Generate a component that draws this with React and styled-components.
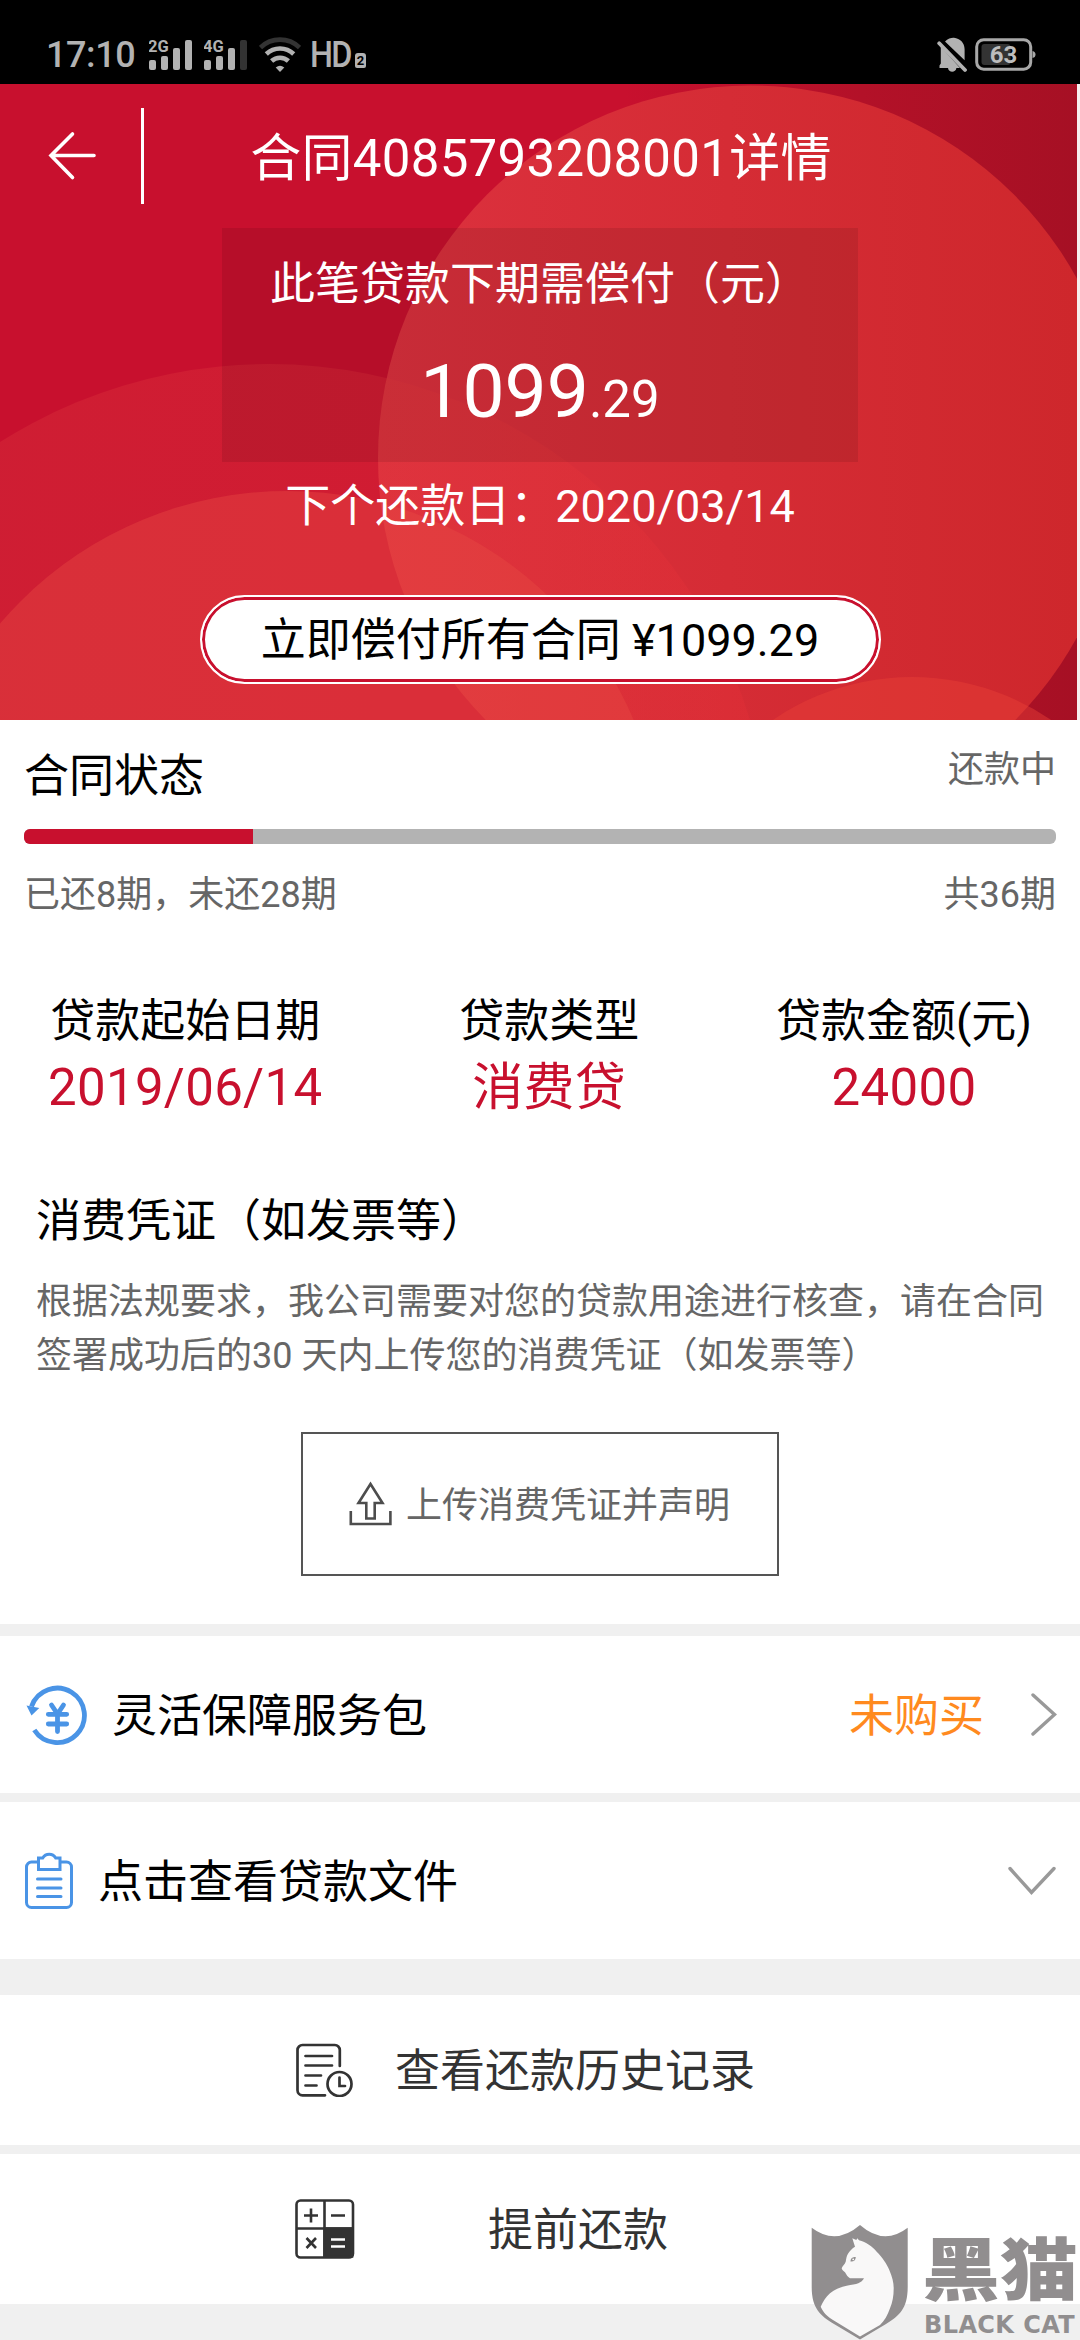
import React from 'react'
import styled, { createGlobalStyle } from 'styled-components'

const GlobalStyle = createGlobalStyle`
  * {
    box-sizing: border-box;
  }
  body {
    margin: 0;
    background: #fff;
    color: #000;
    font-family: Roboto, "Noto Sans CJK SC", sans-serif;
  }
  svg {
    display: block;
    flex-shrink: 0;
  }
`

const Page = styled.div`
  position: relative;
  width: 1080px;
  height: 2340px;
  overflow: hidden;
  display: flex;
  flex-direction: column;
  background: #f0f0f0;
`

/* status bar */
const StatusBar = styled.div`
  height: 84px;
  flex-shrink: 0;
  padding: 26px 44px 0 46px;
  display: flex;
  align-items: flex-start;
  justify-content: space-between;
  background: #000;
  color: #b2b2b2;
`
const StatusGroup = styled.div`
  display: flex;
  align-items: center;
  gap: ${(p) => p.$gap || 0}px;
  height: 58px;
`
const Clock = styled.span`
  width: 103px;
  font-size: 36px;
  font-weight: 500;
  line-height: 58px;
  letter-spacing: -0.4px;
`
const HdLabel = styled.span`
  width: 43px;
  margin-left: 9px;
  font-size: 36px;
  font-weight: 500;
  line-height: 58px;
  height: 58px;
  letter-spacing: -2px;
  transform: scaleX(0.9);
  transform-origin: left;
`
const HdBadge = styled.span`
  margin: 10px 0 0 2px;
  width: 11px;
  height: 15px;
  border-radius: 3px 3px 2px 2px;
  background: #b2b2b2;
  color: #000;
  font-size: 13px;
  font-weight: 700;
  line-height: 16px;
  text-align: center;
`

/* red header */
const Hero = styled.header`
  position: relative;
  height: 636px;
  flex-shrink: 0;
  border-right: 3px solid #f7eeee;
  background: linear-gradient(90deg, #c8102e 0, #c8102e 58%, #b31128 80%, #a61024 100%);
  color: #fff;
  display: flex;
  flex-direction: column;
  align-items: center;
`
const HeroArt = styled.svg`
  position: absolute;
  left: 0;
  top: 0;
`
const TitleBar = styled.div`
  position: relative;
  align-self: flex-start;
  width: 1077px;
  height: 144px;
  display: flex;
  align-items: center;
  padding-left: 48px;
`
const TitleDivider = styled.div`
  width: 3px;
  height: 96px;
  margin-left: 45px;
  background: #fff;
`
const Title = styled.h1`
  flex: 1;
  margin: 0 140px 0 1px;
  padding-top: 5px;
  text-align: center;
  font-size: 51px;
  font-weight: 400;
  line-height: 72px;
  letter-spacing: 0.3px;
`
const DueBox = styled.div`
  position: relative;
  width: 636px;
  height: 234px;
  margin-left: 3px;
  padding-top: 23px;
  display: flex;
  flex-direction: column;
  align-items: center;
  background: rgba(0, 0, 0, 0.09);
`
const DueLabel = styled.div`
  font-size: 45px;
  line-height: 68px;
  white-space: nowrap;
`
const DueAmount = styled.div`
  margin-top: 27px;
  font-size: 75px;
  line-height: 90px;
`
const Cents = styled.span`
  font-size: 51px;
`
const DueDate = styled.div`
  position: relative;
  margin: 11px 0 0 3px;
  font-size: 45px;
  line-height: 68px;
`
const PayButton = styled.button`
  position: relative;
  width: 681px;
  height: 89px;
  margin: 54px 0 0 3px;
  padding: 3px 0 0;
  border: 2px solid #fff;
  border-radius: 45px;
  background: #fff;
  box-shadow: inset 0 0 0 3px #c8102e;
  color: #000;
  font-family: inherit;
  font-size: 45px;
  line-height: 82px;
`

/* contract details */
const Details = styled.section`
  height: 904px;
  flex-shrink: 0;
  background: #fff;
`
const Line = styled.div`
  display: flex;
  justify-content: space-between;
  align-items: flex-start;
  padding: ${(p) => p.$pad || '0 24px'};
`
const Heading = styled.h2`
  margin: 0;
  font-size: 45px;
  font-weight: 400;
  line-height: 68px;
`
const Note = styled.span`
  font-size: 36px;
  line-height: 54px;
  color: #666;
`
const Track = styled.div`
  height: 15px;
  margin: 18px 24px 24px;
  border-radius: 6px;
  overflow: hidden;
  background: #b3b3b3;
`
const Fill = styled.div`
  height: 100%;
  background: #c8102e;
`
const Fact = styled.div`
  text-align: center;
`
const FactLabel = styled.div`
  font-size: 45px;
  line-height: 66px;
`
const FactValue = styled.div`
  font-size: 51px;
  line-height: 65px;
  letter-spacing: 0.3px;
  color: #c8102e;
`
const Proof = styled.div`
  padding: 68px 36px 0;
`
const ProofText = styled.p`
  margin: 19px 0 49px;
  font-size: 36px;
  line-height: 54px;
  color: #666;
`
const UploadButton = styled.button`
  display: flex;
  align-items: center;
  gap: 14px;
  width: 478px;
  height: 144px;
  margin: 0 auto;
  padding: 0 0 0 46px;
  border: 2px solid #555;
  background: #fff;
  color: #666;
  font-family: inherit;
`
const UploadText = styled.span`
  padding-top: 4px;
  font-size: 36px;
  line-height: 54px;
`

/* rows under the details */
const Row = styled.div`
  display: flex;
  align-items: center;
  height: ${(p) => p.$height || 157}px;
  flex-shrink: 0;
  margin-top: ${(p) => p.$gap}px;
  padding: ${(p) => p.$pad || '0 23px'};
  background: #fff;
`
const RowText = styled.span`
  flex: ${(p) => (p.$fixed ? 'none' : 1)};
  margin-left: ${(p) => p.$left}px;
  padding-top: 4px;
  width: ${(p) => (p.$fixed ? '360px' : 'auto')};
  text-align: ${(p) => (p.$fixed ? 'center' : 'left')};
  font-size: 45px;
  line-height: 68px;
  color: ${(p) => (p.$fixed ? '#333' : '#000')};
`
const RowState = styled.span`
  margin-right: 46px;
  padding-top: 4px;
  font-size: 45px;
  line-height: 68px;
  color: #ff8a1f;
`

/* corner watermark */
const Watermark = styled.div`
  position: absolute;
  left: 811px;
  top: 2225px;
  display: flex;
  color: #918e8f;
`
const Brand = styled.div`
  margin-left: 15px;
  padding-top: 6px;
  width: 155px;
`
const BrandName = styled.div`
  height: 79px;
  margin-left: -2px;
  font-family: "Noto Sans CJK SC", sans-serif;
  font-size: 78px;
  font-weight: 900;
  line-height: 79px;
  white-space: nowrap;
  transform: scaleY(0.88);
  transform-origin: top;
`
const BrandLatin = styled.div`
  margin-top: 2px;
  font-family: "DejaVu Sans", sans-serif;
  font-size: 24px;
  font-weight: 700;
  line-height: 26px;
  letter-spacing: 0.4px;
  white-space: nowrap;
`

const Signal = ({ label, strength }) => (
  <svg width="55" height="34" viewBox="0 0 55 34" fill="#b2b2b2">
    <text x="-1" y="13.5" fontSize="16.5" fontWeight="700" fontFamily="Roboto">{label}</text>
    {[[0, 10], [12, 14], [24, 22], [36, 30]].map(([x, h], i) => (
      <rect key={x} x={x} y={32 - h} width="7" height={h} rx="2" fill={i < strength ? '#b2b2b2' : '#333'} />
    ))}
  </svg>
)

const Wifi = () => (
  <svg width="42" height="36" viewBox="0 0 42 36" fill="none" stroke="#b2b2b2" strokeWidth="4.6">
    <path d="M1.5 10.5a28 28 0 0 1 39 0" stroke="#333" />
    <path d="M7.3 17a20 20 0 0 1 27.4 0" />
    <path d="M12.6 24a12.500 12.500 0 0 1 16.800 0" />
    <path d="M21 35l-4.300-4.600q4.300-3.400 8.600 0z" fill="#b2b2b2" stroke="none" />
  </svg>
)

const Bell = () => (
  <svg width="30" height="36" viewBox="0 0 30 36" fill="#b2b2b2">
    <path d="M8 4.500C11 1 15 .5 17 .7c6 .6 10.600 5 10.600 11.500v11z" />
    <path d="M3.800 9.500L23 31h-3.600c-.6 5-7.800 5-8.400 0H2.500v-2.600l1.300-2z" />
    <path d="M2.200 6.300l25.800 26.700" stroke="#b2b2b2" strokeWidth="3.800" strokeLinecap="round" />
  </svg>
)

const Battery = () => (
  <svg width="61" height="34" viewBox="0 0 61 34">
    <rect x="1.700" y="1.700" width="54" height="29.500" rx="7" fill="none" stroke="#a8a8a8" strokeWidth="3" />
    <path d="M57.500 13q3 .5 3 3.500t-3 3.500z" fill="#a8a8a8" />
    <rect x="6.500" y="6" width="29" height="21" rx="3" fill="#333" />
    <text x="28.500" y="25" textAnchor="middle" fontSize="24" fontWeight="700" fontFamily="Roboto" fill="#bdbdbd">63</text>
  </svg>
)

const BackArrow = () => (
  <svg width="48" height="50" viewBox="0 0 48 50" fill="none" stroke="#fff" strokeWidth="3.600" strokeLinecap="round">
    <path d="M24.500 3L3 24.500l21.500 22M3 24.500h43" />
  </svg>
)

const UploadIcon = () => (
  <svg width="43" height="46" viewBox="0 0 43 46" fill="none" stroke="#4d4d4d" strokeWidth="2.600">
    <path d="M21.500 3L9.500 22h7.800v15.500h8.400V22h7.800zM1.800 30v13h39.600V30" />
  </svg>
)

const YuanIcon = () => (
  <svg width="64" height="64" viewBox="0 0 64 64" fill="none" stroke="#4a94e6">
    <path d="M8.500 23.500A27.200 27.200 0 1 1 11.300 47" strokeWidth="4.800" />
    <path d="M3.500 22.500l12.800 2.500L8.500 32.500z" fill="#4a94e6" strokeWidth="0" />
    <path d="M28.500 22l6 9 6-9M25.300 31.300h18.400M25.300 41h18.400M34.500 31v17.500" strokeWidth="4.800" strokeLinecap="round" strokeLinejoin="round" />
  </svg>
)

const ClipboardIcon = () => (
  <svg width="52" height="58" viewBox="0 0 52 58" fill="none" stroke="#4a94e6" strokeWidth="3">
    <path d="M15 10H8.500a5 5 0 0 0-5 5V50.500a5 5 0 0 0 5 5h35a5 5 0 0 0 5-5V15a5 5 0 0 0-5-5H37.500" />
    <path d="M15.500 6v11.500h21.500V6h-4.300c-3-5-10-5-13 0z" />
    <path d="M14.500 27h23.500M14.500 36h23.500M14.500 44.500h23.500" strokeLinecap="round" />
  </svg>
)

const HistoryIcon = () => (
  <svg width="58" height="54" viewBox="0 0 58 54" fill="none" stroke="#333" strokeWidth="2.700" strokeLinecap="round">
    <path d="M29 52.300H6.500a5 5 0 0 1-5-5V7a5 5 0 0 1 5-5h32.300a5 5 0 0 1 5 5v16" />
    <path d="M9.500 13H36M9.500 22.500H36M9.500 32.500h15.500M9.500 42.500h11M43.500 34.500v8.500h5.500" />
    <circle cx="43.500" cy="41" r="12" />
  </svg>
)

const CalculatorIcon = () => (
  <svg width="60" height="60" viewBox="0 0 60 60" fill="none" stroke="#333" strokeWidth="2.600">
    <rect x="1.500" y="1.500" width="56.500" height="57" rx="4" />
    <path d="M29.500 29.500h27.500v28h-27.500z" fill="#333" />
    <path d="M29.500 1v58M1 29.500h58M9 16.500h14M16 9.500v14M36 16.500h14M11.500 39l9.500 10M21 39l-9.500 10" />
    <path d="M36 40.500h14M36 47.500h14" stroke="#fff" />
  </svg>
)

const Shield = () => (
  <svg width="98" height="115" viewBox="0 0 98 115">
    <path d="M.7 2.700Q24.700 21 49 0q24 21 47.700 2.700V62c0 22-8.700 29-21.700 37l-26 15.500L23 99C10 91 .7 84 .7 62z" fill="#918e8f" />
    <path d="M41.300 13.300l4 1.700 1-1.700 1.700 1.900C55 17 61.500 21.500 65.700 26.700 71 32 76 39 78.300 45c3 7 4.400 12.500 4.400 18.300 0 8-1.200 14-3.700 20-2.500 7-5.500 12.500-10 16.700L49 111.500 22 95C17 92 12 87.500 9.700 81.700c2.300-5 5-9.500 9.300-13.400 5-4.300 10.500-6.300 16.700-7.600 5-1 9-1.400 11.600-2.400 2.500-1 4.700-2.800 5.700-5H39c-2.500-1.500-3.500-3.500-5-6-1.600-1.200-3.300-2.500-3.300-4 .6-2.500 3-3.500 4-6.600.6-3 .8-6 2.600-8.400 1.600-2.600 4-5 6.700-6.600z" fill="#fff" fillOpacity=".94" />
    <path d="M39.500 36.500c.2-3.500 2-4.500 5.300-4.500-.3 3.300-2 4.800-5.300 4.500z" fill="#918e8f" />
    <circle cx="42.200" cy="34.300" r=".9" fill="#fff" />
  </svg>
)

const facts = [
  { label: '贷款起始日期', value: '2019/06/14' },
  { label: '贷款类型', value: '消费贷' },
  { label: '贷款金额(元)', value: '24000' },
]

const App = () => {
  const paid = 8
  const total = 36

  return (
    <Page>
      <GlobalStyle />
      <StatusBar>
        <StatusGroup>
          <Clock>17:10</Clock>
          <Signal label="2G" strength={4} />
          <Signal label="4G" strength={3} />
          <Wifi />
          <HdLabel>HD</HdLabel>
          <HdBadge>2</HdBadge>
        </StatusGroup>
        <StatusGroup $gap={8}>
          <Bell />
          <Battery />
        </StatusGroup>
      </StatusBar>

      <Hero>
        <HeroArt width="1077" height="636" viewBox="0 84 1077 636">
          <defs>
            <linearGradient id="disc" gradientUnits="userSpaceOnUse" x1="380" y1="0" x2="1077" y2="0">
              <stop offset="0" stopColor="#dc313e" />
              <stop offset="1" stopColor="#ce272c" />
            </linearGradient>
            <linearGradient id="hill" gradientUnits="userSpaceOnUse" x1="0" y1="0" x2="760" y2="0">
              <stop offset="0" stopColor="#e04040" stopOpacity=".28" />
              <stop offset="1" stopColor="#e83038" stopOpacity=".32" />
            </linearGradient>
          </defs>
          <circle cx="750.500" cy="458" r="372.500" fill="url(#disc)" />
          <circle cx="269" cy="867" r="503" fill="url(#hill)" />
          <circle cx="287" cy="868" r="377" fill="#e84a44" fillOpacity=".4" />
          <circle cx="912" cy="924" r="247" fill="#e84038" fillOpacity=".45" />
        </HeroArt>
        <TitleBar>
          <BackArrow />
          <TitleDivider />
          <Title>合同4085793208001详情</Title>
        </TitleBar>
        <DueBox>
          <DueLabel>此笔贷款下期需偿付（元）</DueLabel>
          <DueAmount>1099<Cents>.29</Cents></DueAmount>
        </DueBox>
        <DueDate>下个还款日：2020/03/14</DueDate>
        <PayButton>立即偿付所有合同 ¥1099.29</PayButton>
      </Hero>

      <Details>
        <Line $pad="23px 24px 0">
          <Heading>合同状态</Heading>
          <Note>还款中</Note>
        </Line>
        <Track>
          <Fill style={{ width: `${(paid / total) * 100}%` }} />
        </Track>
        <Line>
          <Note>已还{paid}期，未还{total - paid}期</Note>
          <Note>共{total}期</Note>
        </Line>
        <Line $pad="67px 48px 0 48px">
          {facts.map((fact) => (
            <Fact key={fact.label}>
              <FactLabel>{fact.label}</FactLabel>
              <FactValue>{fact.value}</FactValue>
            </Fact>
          ))}
        </Line>
        <Proof>
          <Heading>消费凭证（如发票等）</Heading>
          <ProofText>
            根据法规要求，我公司需要对您的贷款用途进行核查，请在合同签署成功后的30 天内上传您的消费凭证（如发票等）
          </ProofText>
          <UploadButton>
            <UploadIcon />
            <UploadText>上传消费凭证并声明</UploadText>
          </UploadButton>
        </Proof>
      </Details>

      <Row $gap={12}>
        <YuanIcon />
        <RowText $left={25}>灵活保障服务包</RowText>
        <RowState>未购买</RowState>
        <svg width="27" height="46" viewBox="0 0 27 46" fill="none" stroke="#999" strokeWidth="3.400" strokeLinecap="round">
          <path d="M3 3l21.500 19.500L3 42" />
        </svg>
      </Row>
      <Row $gap={9}>
        <ClipboardIcon />
        <RowText $left={23}>点击查看贷款文件</RowText>
        <svg width="50" height="30" viewBox="0 0 50 30" fill="none" stroke="#999" strokeWidth="3.400" strokeLinecap="round">
          <path d="M3 2.500l21.500 24L47 2.500" />
        </svg>
      </Row>
      <Row $gap={36} $height={150} $pad="0 0 0 296px">
        <HistoryIcon />
        <RowText $left={41} $fixed>查看还款历史记录</RowText>
      </Row>
      <Row $gap={9} $height={150} $pad="0 0 0 295px">
        <CalculatorIcon />
        <RowText $left={43} $fixed>提前还款</RowText>
      </Row>

      <Watermark>
        <Shield />
        <Brand>
          <BrandName>黑猫</BrandName>
          <BrandLatin>BLACK CAT</BrandLatin>
        </Brand>
      </Watermark>
    </Page>
  )
}

export default App
